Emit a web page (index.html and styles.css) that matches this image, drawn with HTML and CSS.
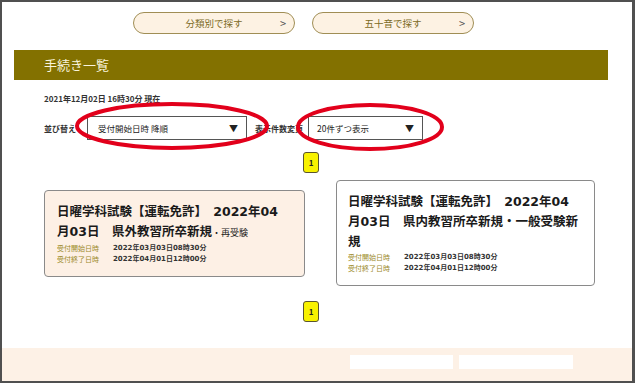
FILE: index.html
```html
<!DOCTYPE html>
<html lang="ja">

<head>
  <meta charset="UTF-8" />
  <meta name="viewport" content="width=device-width, initial-scale=1.0" />
  <title>手続き一覧</title>
  <link rel="stylesheet" href="styles.css">
</head>

<body>
  <div class="frame">
    <!-- 検索ボタン -->
    <div class="nav">
      <a href="#" class="nav-btn"><span>分類別で探す</span><span class="arrow">&gt;</span></a>
      <a href="#" class="nav-btn"><span>五十音で探す</span><span class="arrow">&gt;</span></a>
    </div>

    <h1 class="title-bar">手続き一覧</h1>

    <div class="content">
      <p class="stamp">2021年12月02日 16時30分 現在</p>

      <div class="sort-row">
        <span class="label label-sort">並び替え</span>
        <div class="select select-sort"><span>受付開始日時 降順</span><span class="caret">▼</span></div>
        <span class="label label-count">表示件数変更</span>
        <div class="select select-count"><span>20件ずつ表示</span><span class="caret">▼</span></div>
      </div>

      <div class="pager"><span class="page">1</span></div>

      <div class="cards">
        <div class="card card-pink">
          <p class="card-title">日曜学科試験【運転免許】　2022年04月03日　県外教習所卒新規<span class="sub">・再受験</span></p>
          <dl class="meta">
            <dt>受付開始日時</dt>
            <dd>2022年03月03日08時30分</dd>
            <dt>受付終了日時</dt>
            <dd>2022年04月01日12時00分</dd>
          </dl>
        </div>
        <div class="card">
          <p class="card-title">日曜学科試験【運転免許】　2022年04月03日　県内教習所卒新規・一般受験新規</p>
          <dl class="meta">
            <dt>受付開始日時</dt>
            <dd>2022年03月03日08時30分</dd>
            <dt>受付終了日時</dt>
            <dd>2022年04月01日12時00分</dd>
          </dl>
        </div>
      </div>

      <div class="pager pager-bottom"><span class="page">1</span></div>
    </div>

    <div class="footer">
      <span class="foot-box"></span>
      <span class="foot-box foot-box-wide"></span>
    </div>

    <!-- 赤丸 -->
    <svg class="marks" width="631" height="379" viewBox="0 0 631 379">
      <ellipse cx="170" cy="124" rx="95" ry="22" />
      <ellipse cx="368" cy="125" rx="72" ry="22" />
    </svg>
  </div>
</body>

</html>
```

FILE: styles.css
```css
* {
  margin: 0;
  padding: 0;
  box-sizing: border-box;
}

body {
  font-family: "Noto Sans CJK JP", "Noto Sans", sans-serif;
  color: #222;
  background: #fff;
}

a {
  text-decoration: none;
}

.frame {
  position: relative;
  width: 635px;
  height: 383px;
  border: 2px solid #505050;
  border-right-width: 3px;
  display: flex;
  flex-direction: column;
  overflow: hidden;
}

/* 検索ボタン */
.nav {
  display: flex;
  gap: 17px;
  padding: 10px 0 0 131px;
}

.nav-btn {
  position: relative;
  display: flex;
  justify-content: center;
  align-items: center;
  width: 162px;
  height: 22px;
  border: 1px solid #a08e55;
  border-radius: 11px;
  background-color: #fdf2e3;
  color: #7b6a24;
  font-size: 9.5px;
}

.nav-btn .arrow {
  position: absolute;
  right: 8px;
  top: 2px;
  color: #555;
  font-size: 11px;
}

.title-bar {
  width: 594px;
  height: 30px;
  margin: 16px 0 0 12px;
  padding-left: 30px;
  background-color: #837100;
  color: #f9f4dc;
  font-size: 13px;
  font-weight: normal;
  line-height: 30px;
}

.content {
  padding-left: 42px;
}

.stamp {
  margin-top: 13px;
  font-size: 8px;
  font-weight: bold;
  line-height: 12px;
  color: #333;
}

.sort-row {
  display: flex;
  align-items: center;
  margin-top: 11px;
  height: 24px;
}

.label {
  font-size: 8px;
  font-weight: bold;
  color: #333;
}

.label-sort {
  width: 43px;
}

.label-count {
  width: 53px;
  margin-left: 8px;
}

.select {
  display: flex;
  justify-content: space-between;
  align-items: center;
  height: 24px;
  padding: 0 8px 0 10px;
  border: 1px solid #555;
  font-size: 8.5px;
  color: #222;
}

.select-sort {
  width: 160px;
}

.select-count {
  width: 115px;
  padding-left: 8px;
}

.caret {
  font-size: 9px;
}

.pager {
  display: flex;
  margin-top: 12px;
  padding-left: 259px;
}

.pager-bottom {
  margin-top: 15px;
}

.page {
  display: inline-block;
  width: 16px;
  height: 21px;
  line-height: 19px;
  border: 1px solid #5a5530;
  border-radius: 3px;
  background-color: #f8f200;
  text-align: center;
  font-size: 8px;
  font-weight: bold;
}

.cards {
  display: flex;
  align-items: center;
  gap: 31px;
  margin-top: 7px;
}

.card {
  width: 259px;
  padding: 11px 16px 11px 11px;
  border: 1px solid #8a8a8a;
  border-radius: 4px;
  background-color: #fff;
}

.card-pink {
  width: 261px;
  padding-left: 12px;
  background-color: #fdf0e5;
}

/* 数字は幅の広い書体 */
.card-title {
  font-family: "DejaVu Sans", "Noto Sans CJK JP", sans-serif;
  font-size: 12.5px;
  font-weight: bold;
  line-height: 20px;
  color: #1a1a1a;
}

.card-title .sub {
  font-size: 9px;
  font-weight: normal;
}

.meta {
  display: grid;
  grid-template-columns: 56px auto;
  font-size: 7px;
  line-height: 11px;
}

.meta dt {
  color: #9c8a2a;
}

.meta dd {
  font-family: "DejaVu Sans", "Noto Sans CJK JP", sans-serif;
  color: #333;
  font-weight: bold;
}

.footer {
  display: flex;
  gap: 6px;
  margin-top: auto;
  height: 33px;
  padding: 7px 0 0 348px;
  background-color: #fdf1e6;
}

.foot-box {
  width: 103px;
  height: 14px;
  background-color: #fff;
}

.foot-box-wide {
  width: 114px;
}

/* 赤丸 */
.marks {
  position: absolute;
  left: 0;
  top: 0;
  pointer-events: none;
}

.marks ellipse {
  fill: none;
  stroke: #e2001b;
  stroke-width: 4;
}
```
